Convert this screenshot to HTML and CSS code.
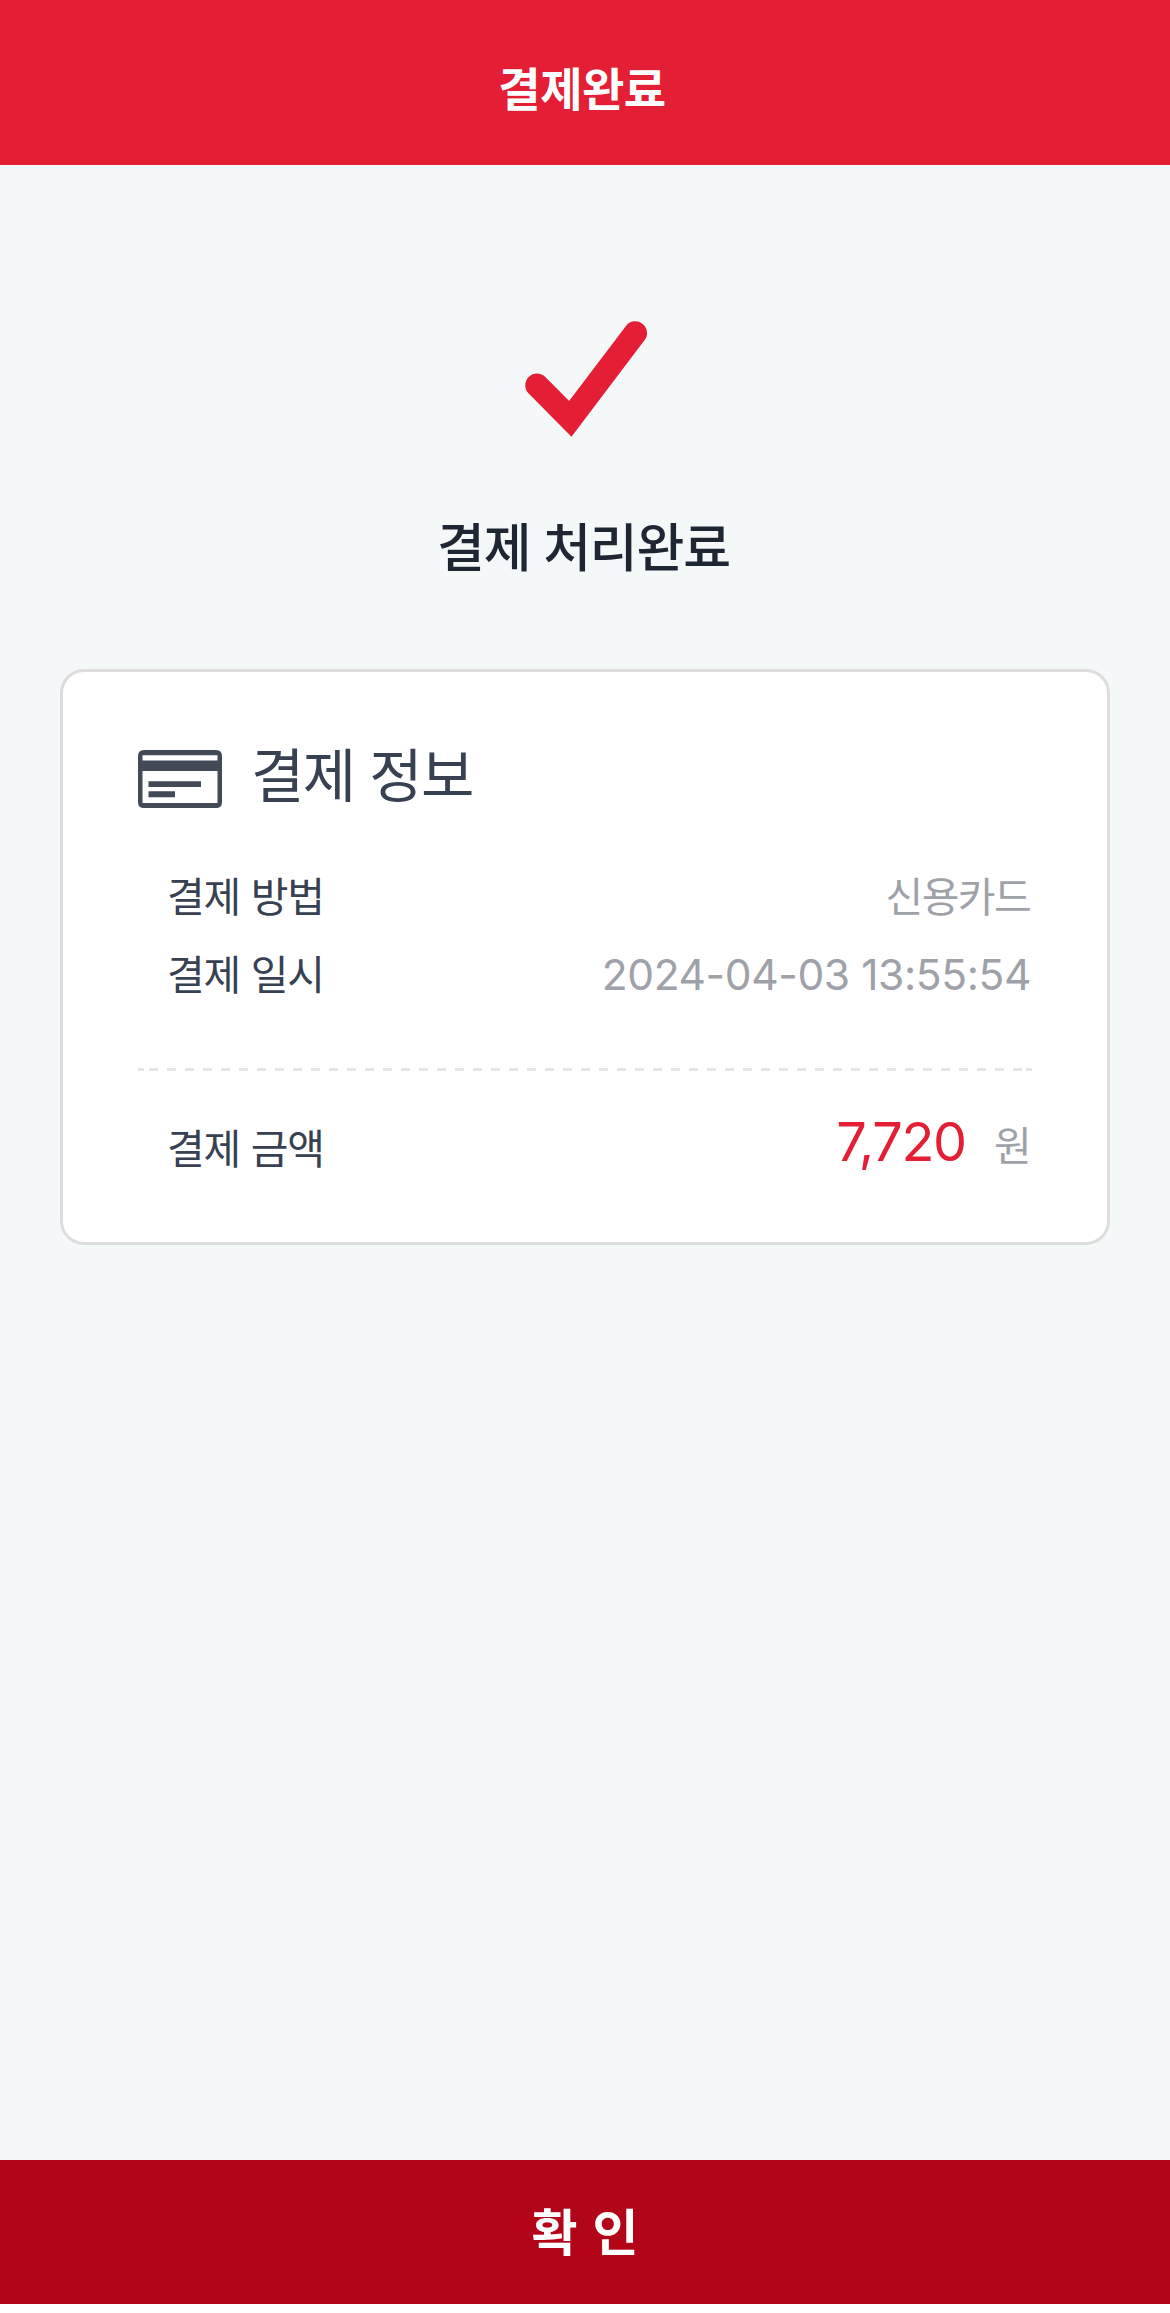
FILE: index.html
```html
<!DOCTYPE html>
<html lang="ko">
<head>
<meta charset="utf-8">
<title>결제완료</title>
<link rel="stylesheet" href="styles.css">
</head>
<body>
<header class="topbar"><h1 class="topbar-title">결제완료</h1></header>
<main class="content">
  <svg class="check" width="126" height="120" viewBox="0 0 126 120" fill="none" stroke="#e41e34" stroke-width="23.5" stroke-linecap="round">
    <path d="M12 65.3 45.3 98.8 110.3 13"/>
  </svg>
  <h2 class="status">결제 처리완료</h2>
  <section class="card">
    <div class="card-head">
      <svg class="card-icon" width="84" height="58" viewBox="0 0 84 58">
        <path fill="#434a57" fill-rule="evenodd" d="M6 0H78Q84 0 84 6V52Q84 58 78 58H6Q0 58 0 52V6Q0 0 6 0ZM4.5 5.3V10.5H79.5V5.3ZM4.5 21V53H79.5V21ZM10.5 31.3H63V37H10.5ZM10.5 41.3H37V47.3H10.5Z"/>
      </svg>
      <h3 class="card-title">결제 정보</h3>
    </div>
    <dl class="rows">
      <div class="row"><dt class="label">결제 방법</dt><dd class="value">신용카드</dd></div>
      <div class="row"><dt class="label">결제 일시</dt><dd class="value date">2024-04-03 13:55:54</dd></div>
    </dl>
    <hr class="divider">
    <dl class="rows total">
      <div class="row"><dt class="label">결제 금액</dt><dd class="value sum"><span class="amount">7,720</span><span class="unit">원</span></dd></div>
    </dl>
  </section>
</main>
<button class="confirm">확 인</button>
</body>
</html>
```
FILE: styles.css
```css
* { box-sizing: border-box; margin: 0; padding: 0; }
html { background: #fff; }
body {
  display: flex;
  flex-direction: column;
  height: 2313px;
  padding-bottom: 9px;
  font-family: Inter, "Noto Sans CJK KR", sans-serif;
  font-weight: 400;
}
.topbar {
  height: 165px;
  padding: 53px 6px 0 0;
  background: #e41e34;
  color: #fff;
  text-align: center;
}
.topbar-title { font-size: 46px; line-height: 72px; font-weight: 700; letter-spacing: -0.5px; }
.content {
  flex: 1;
  display: flex;
  flex-direction: column;
  align-items: center;
  padding: 155px 60px 0;
  background: #f4f8f9;
}
.check { display: block; margin-left: 6px; overflow: visible; }
.status {
  margin: 69px 3px 0 0;
  color: #1e2533;
  font-size: 52px;
  line-height: 80px;
  font-weight: 500;
  letter-spacing: -1.1px;
}
.card {
  width: 1050px;
  height: 576px;
  margin-top: 80px;
  padding: 0 75px;
  background: #fff;
  border: 3px solid #ddd;
  border-radius: 24px;
}
.card-head { display: flex; align-items: center; gap: 29px; height: 84px; margin-top: 62px; }
.card-icon { margin-top: 6px; }
.card-title { color: #374151; font-size: 58px; line-height: 84px; font-weight: 400; letter-spacing: -1.6px; }
.rows { padding: 0 2px 0 29px; margin-top: 40px; }
.row { display: flex; align-items: center; justify-content: space-between; height: 78px; }
.label { color: #374151; font-size: 41px; letter-spacing: -1.1px; line-height: 78px; }
.value { color: #9ea2a8; font-size: 41px; letter-spacing: -1.6px; line-height: 78px; }
.date { font-size: 42.5px; letter-spacing: -0.4px; margin-right: -1px; padding-bottom: 1px; }
.divider {
  height: 3px;
  border: 0;
  margin-top: 54px;
  background:
    linear-gradient(#e1e6eb, #e1e6eb) 0 0 / 6px 3px no-repeat,
    linear-gradient(#e1e6eb, #e1e6eb) 100% 0 / 6px 3px no-repeat,
    repeating-linear-gradient(90deg, #e1e6eb 0 9px, transparent 9px 18px) 10.6px 0 / 873px 3px no-repeat;
}
.total { margin-top: 39px; }
.sum { display: flex; align-items: center; gap: 28px; }
.amount { color: #e41e34; font-size: 54px; letter-spacing: -1.3px; padding-bottom: 14px; }
.unit { font-size: 41px; padding-bottom: 6px; }
.confirm {
  height: 144px;
  padding-top: 2px;
  border: 0;
  background: #b30518;
  color: #fff;
  font: 700 50px/140px Inter, "Noto Sans CJK KR", sans-serif;
  word-spacing: 3px;
}
```
